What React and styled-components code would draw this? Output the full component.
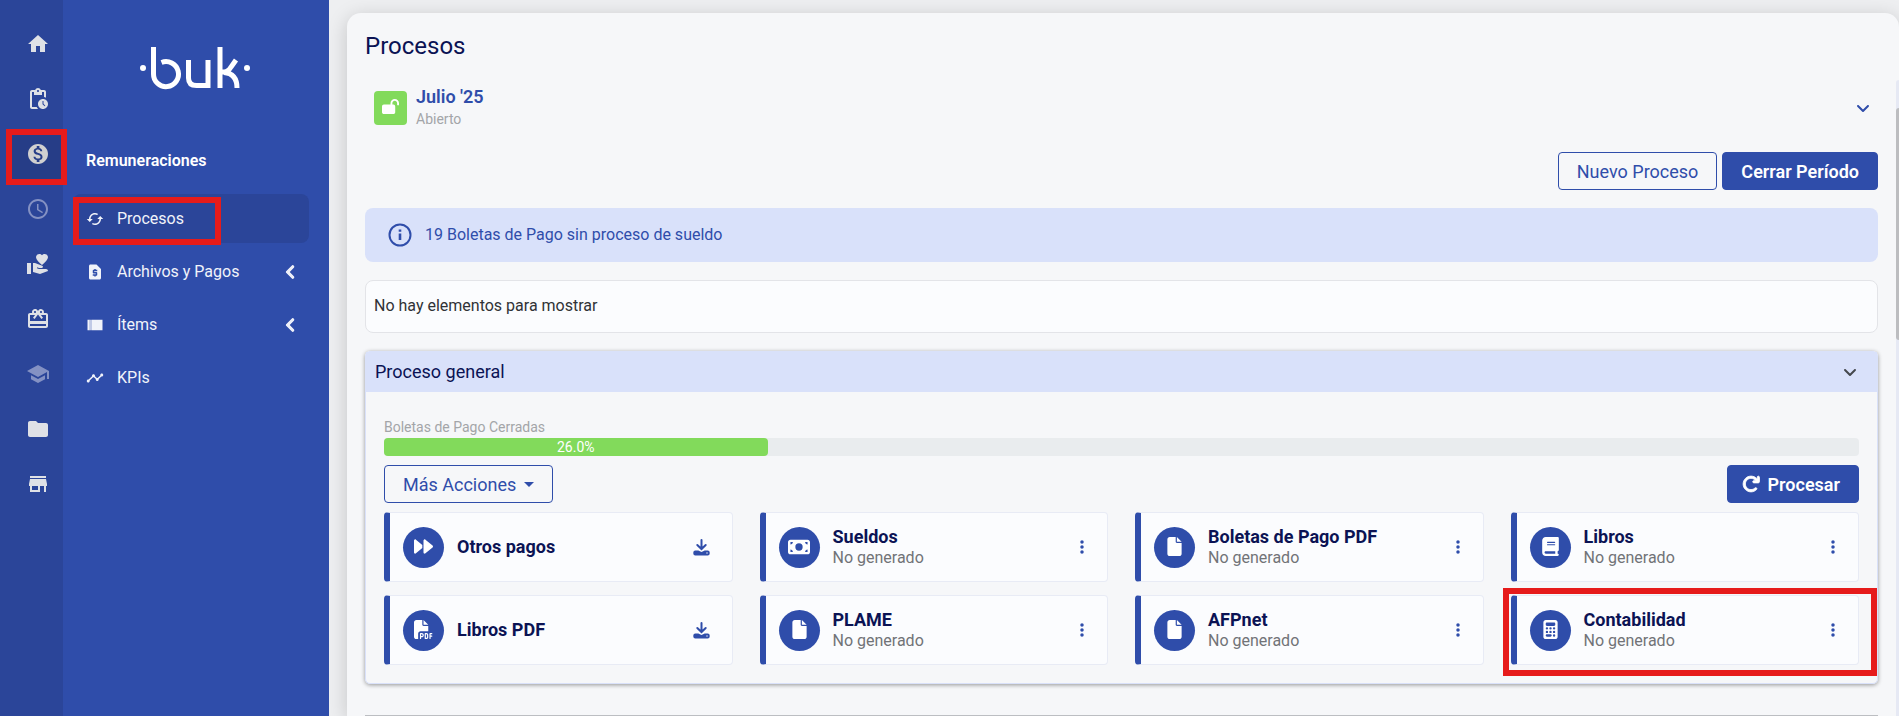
import React from "react";
import styled, { createGlobalStyle, css } from "styled-components";
import {
  MdCached,
  MdFolder,
  MdHome,
  MdMonetizationOn,
  MdPendingActions,
  MdRedeem,
  MdRequestPage,
  MdSchedule,
  MdSchool,
  MdStore,
  MdTimeline,
  MdVolunteerActivism,
} from "react-icons/md";
import {
  FaAngleDown,
  FaArrowRotateRight,
  FaBook,
  FaCalculator,
  FaChevronLeft,
  FaEllipsisVertical,
  FaFile,
  FaFilePdf,
  FaForward,
  FaLockOpen,
  FaMoneyBill,
} from "react-icons/fa6";

const blue = "#2f4daa";
const navy = "#0b1354";
const sky = "#d9e1fa";
const surface = "#f6f7f9";

const GlobalStyle = createGlobalStyle`
  * {
    box-sizing: border-box;
  }

  body {
    margin: 0;
    font-family: Roboto, "Open Sans", sans-serif;
    font-size: 16px;
    line-height: 20px;
    color: #303236;
    background-color: #eeeff1;
  }

  button {
    font-family: inherit;
    cursor: pointer;
  }
`;

const Layout = styled.div`
  display: flex;
  height: 100vh;
  overflow: hidden;
`;

const Highlight = styled.span`
  position: absolute;
  border: 6px solid #e61b1b;
  pointer-events: none;
  z-index: 2;
`;

// ======================================================
//  Icon rail

const Rail = styled.nav`
  display: flex;
  flex-direction: column;
  flex-shrink: 0;
  gap: 5px;
  width: 63px;
  padding-top: 19px;
  background-color: #2b4599;
`;

const RailLink = styled.a`
  position: relative;
  display: flex;
  align-items: center;
  justify-content: center;
  height: 50px;
  margin-left: 13px;
  font-size: 24px;
  color: ${(props) => (props.$muted ? "#8491c3" : "#dfe1e6")};

  ${(props) =>
    props.$active &&
    css`
      color: #d0d0d0;
      background-color: #263d87;
      box-shadow: inset -2px 0 #c09aa0, -4px 0 #263d87;
    `}
`;

const RailHighlight = styled(Highlight)`
  inset: 0 -4px -6px -7px;
`;

// ======================================================
//  Module menu

const Sidebar = styled.aside`
  flex-shrink: 0;
  width: 266px;
  padding: 44px 20px 0 10px;
  background-color: ${blue};
  color: white;
`;

const Logo = styled.svg`
  display: block;
  width: 112px;
  height: 48px;
  margin: 0 auto 0 66px;
`;

const ModuleName = styled.h2`
  margin: 59px 0 23px 13px;
  font-size: 16px;
  font-weight: 600;
  line-height: 20px;
`;

const MenuList = styled.div`
  display: flex;
  flex-direction: column;
  gap: 4px;
`;

const MenuLink = styled.a`
  position: relative;
  display: flex;
  align-items: center;
  height: 49px;
  padding: 0 11px 0 13px;
  border-radius: 8px;
  color: #f1f3fa;
  text-decoration: none;
  background-color: ${(props) => (props.$active ? "#2b4599" : "transparent")};
`;

const MenuIcon = styled.span`
  display: flex;
  width: 18px;
  margin-right: 13px;
  font-size: 18px;
`;

const MenuArrow = styled(FaChevronLeft)`
  margin-left: auto;
  font-size: 14px;
  stroke-width: 50px;
`;

const MenuHighlight = styled(Highlight)`
  inset: 3px 88px -2px 0;
`;

// ======================================================
//  Main section

const Main = styled.main`
  position: relative;
  flex: 1;
  min-width: 0;
  padding: 13px 0 0 18px;
`;

const Sheet = styled.section`
  min-height: 100%;
  padding: 16px 21px 0 18px;
  border-radius: 14px 14px 0 0;
  background-color: ${surface};
  box-shadow: 0 4px 20px rgba(0, 0, 0, 0.18);
`;

const Title = styled.h1`
  margin: 0 0 21px;
  font-size: 24px;
  font-weight: 400;
  line-height: 34px;
  color: ${navy};
`;

const Period = styled.div`
  display: flex;
  align-items: center;
  gap: 9px;
  height: 48px;
  padding: 0 7px 0 9px;
`;

const PeriodBadge = styled.span`
  display: flex;
  align-items: center;
  justify-content: center;
  width: 33px;
  height: 34px;
  padding-bottom: 3px;
  border-radius: 4px;
  font-size: 17px;
  color: white;
  background-color: #82da5b;
`;

const PeriodText = styled.div`
  padding-bottom: 3px;
`;

const PeriodName = styled.a`
  display: block;
  font-size: 18px;
  font-weight: 600;
  line-height: 24px;
  color: ${blue};
  text-decoration: none;
`;

const SmallText = styled.div`
  font-size: 14px;
  line-height: 20px;
  color: #a3a5a8;
`;

const ToggleButton = styled.button`
  display: flex;
  margin-left: auto;
  padding: 0;
  border: none;
  background: none;
  font-size: 16px;
  color: ${(props) => (props.$dark ? "#45484d" : blue)};
`;

const Actions = styled.div`
  display: flex;
  justify-content: ${(props) => (props.$spread ? "space-between" : "flex-end")};
  gap: 5px;
`;

const PeriodActions = styled(Actions)`
  margin: 20px 0 18px;
`;

const Button = styled.button`
  display: flex;
  align-items: center;
  gap: 8px;
  height: 38px;
  padding: 0 18px;
  padding-left: ${(props) => (props.$withIcon ? "14px" : "18px")};
  border: 1px solid ${blue};
  border-radius: 4px;
  font-size: 18px;
  font-weight: ${(props) => (props.$primary ? 600 : 400)};
  color: ${(props) => (props.$primary ? "white" : blue)};
  background-color: ${(props) => (props.$primary ? blue : "transparent")};
`;

const Caret = styled.span`
  border: 5px solid transparent;
  border-top-color: ${blue};
  border-bottom: none;
`;

const Notice = styled.div`
  display: flex;
  align-items: center;
  gap: 13px;
  height: 54px;
  padding: 0 23px;
  border-radius: 8px;
  color: ${blue};
  background-color: ${sky};
`;

const EmptyBox = styled.div`
  margin: 18px 0;
  padding: 15px 8px 16px;
  border: 1px solid #e3e4e8;
  border-radius: 8px;
  background-color: #fbfcfe;
`;

const Panel = styled.section`
  border: 1px solid ${sky};
  border-radius: 5px;
  box-shadow: 0 1px 4px rgba(0, 0, 0, 0.4);
`;

const PanelHeader = styled.header`
  display: flex;
  align-items: center;
  height: 40px;
  padding: 0 19px 0 9px;
  background-color: ${sky};
`;

const PanelTitle = styled.h2`
  margin: 0;
  font-size: 18px;
  font-weight: 400;
  color: ${navy};
`;

const PanelBody = styled.div`
  padding: 25px 18px 18px;
`;

const Progress = styled.div`
  height: 18px;
  margin: 1px 0 9px;
  border-radius: 4px;
  background-color: #e9ecee;
`;

const ProgressBar = styled.div`
  height: 100%;
  border-radius: 4px;
  font-size: 14px;
  line-height: 18px;
  text-align: center;
  color: white;
  background-color: #82da5b;
`;

const Cards = styled.div`
  display: grid;
  grid-template-columns: repeat(4, 1fr);
  gap: 13px 27px;
  margin-top: 9px;
`;

const CardHolder = styled.article`
  position: relative;
  display: flex;
  align-items: center;
  height: 70px;
  padding: 0 20px 0 13px;
  border: 1px solid #e8ebf5;
  border-left: 6px solid ${blue};
  border-radius: 4px;
  background-color: #fbfcfe;
`;

const CardIcon = styled.span`
  display: flex;
  align-items: center;
  justify-content: center;
  width: 41px;
  height: 41px;
  padding-bottom: 1px;
  margin-right: 13px;
  border-radius: 50%;
  font-size: ${(props) => (props.$large ? "22px" : "19px")};
  color: white;
  background-color: ${blue};
`;

const CardTitle = styled.h3`
  margin: 0;
  font-size: 18px;
  font-weight: 700;
  line-height: 22px;
  color: ${navy};
`;

const CardStatus = styled.div`
  color: #717377;
`;

const CardButton = styled.button`
  display: flex;
  justify-content: center;
  width: ${(props) => (props.$wide ? "20px" : "10px")};
  margin-left: auto;
  padding: 0;
  border: none;
  background: none;
  font-size: 16px;
  color: ${blue};
`;

const CardHighlight = styled(Highlight)`
  inset: -8px -19px -12px -14px;
`;

const Divider = styled.hr`
  margin: 31px 0 0;
  border: none;
  border-top: 1px solid #bcbec2;
`;

const ScrollTrack = styled.div`
  position: absolute;
  top: 80px;
  right: 0;
  bottom: 0;
  width: 3px;
  padding-top: 28px;
  border-radius: 3px 0 0 0;
  background-color: #e6e9f4;
`;

const ScrollThumb = styled.div`
  height: 232px;
  border-radius: 3px 0 0 3px;
  background-color: #bcbdc0;
`;

const ItemsIcon = () => (
  <svg width="1em" height="1em" viewBox="0 0 24 24" fill="currentColor">
    <path d="M2 5h3v14H2z" />
    <path d="M5 5h3v14H5z" opacity="0.75" />
    <path d="M8 5h14v14H8z" />
  </svg>
);

const InfoIcon = () => (
  <svg width="24" height="24" viewBox="0 0 24 24" fill="none">
    <circle cx="12" cy="12" r="10.5" stroke="currentColor" strokeWidth="2" />
    <path d="M12 10.5v6.5M12 6.5v2.2" stroke="currentColor" strokeWidth="2.6" />
  </svg>
);

const DownloadIcon = () => (
  <svg width="17" height="17" viewBox="0 0 17 17" fill="none">
    <path
      d="M8.5 1v8M4.3 6l4.2 4 4.2-4"
      stroke="currentColor"
      strokeWidth="2"
      strokeLinecap="round"
    />
    <path
      d="M2.3 11.5h3l3.2 1.5 3.2-1.5h3a2 2 0 0 1 2 2v1a2 2 0 0 1-2 2H2.3a2 2 0 0 1-2-2v-1a2 2 0 0 1 2-2z"
      fill="currentColor"
    />
    <circle cx="14" cy="14" r="0.7" fill="white" />
  </svg>
);

const railItems = [
  { label: "Inicio", icon: <MdHome /> },
  { label: "Pendientes", icon: <MdPendingActions /> },
  { label: "Remuneraciones", icon: <MdMonetizationOn />, active: true },
  { label: "Asistencia", icon: <MdSchedule />, muted: true },
  { label: "Beneficios", icon: <MdVolunteerActivism /> },
  { label: "Regalos", icon: <MdRedeem /> },
  { label: "Capacitaciones", icon: <MdSchool />, muted: true },
  { label: "Documentos", icon: <MdFolder /> },
  { label: "Tienda", icon: <MdStore /> },
];

const menuItems = [
  { label: "Procesos", icon: <MdCached />, active: true },
  { label: "Archivos y Pagos", icon: <MdRequestPage />, nested: true },
  { label: "Ítems", icon: <ItemsIcon />, nested: true },
  { label: "KPIs", icon: <MdTimeline /> },
];

const cards = [
  { title: "Otros pagos", icon: <FaForward />, download: true },
  { title: "Sueldos", icon: <FaMoneyBill />, large: true },
  { title: "Boletas de Pago PDF", icon: <FaFile /> },
  { title: "Libros", icon: <FaBook /> },
  { title: "Libros PDF", icon: <FaFilePdf />, download: true },
  { title: "PLAME", icon: <FaFile /> },
  { title: "AFPnet", icon: <FaFile /> },
  { title: "Contabilidad", icon: <FaCalculator />, marked: true },
];

const Card = ({ title, icon, large, download, marked }) => {
  return (
    <CardHolder>
      <CardIcon $large={large}>{icon}</CardIcon>
      <div>
        <CardTitle>{title}</CardTitle>
        {!download && <CardStatus>No generado</CardStatus>}
      </div>
      <CardButton
        type="button"
        $wide={download}
        aria-label={download ? "Descargar" : "Opciones"}
      >
        {download ? <DownloadIcon /> : <FaEllipsisVertical />}
      </CardButton>
      {marked && <CardHighlight />}
    </CardHolder>
  );
};

const App = () => {
  const progress = "26.0%";

  return (
    <>
      <GlobalStyle />
      <Layout>
        <Rail>
          {railItems.map((item) => (
            <RailLink
              key={item.label}
              href="#"
              aria-label={item.label}
              $active={item.active}
              $muted={item.muted}
            >
              {item.icon}
              {item.active && <RailHighlight />}
            </RailLink>
          ))}
        </Rail>

        <Sidebar>
          <Logo viewBox="0 0 112 48" fill="none" stroke="white" strokeWidth="5">
            <circle cx="4" cy="24" r="3" fill="white" stroke="none" />
            <circle cx="108" cy="24" r="3" fill="white" stroke="none" />
            <path d="M14.5 3v27a12.5 12.5 0 1 0 8-11.5" />
            <path d="M49.5 16v18q0 7.5 8 7.5h11.5V16" />
            <path d="M81 3v41M81 28h4q4 0 7-5l5-7M85 28.5q13 1 13 15.5" />
          </Logo>
          <ModuleName>Remuneraciones</ModuleName>
          <MenuList>
            {menuItems.map((item) => (
              <MenuLink key={item.label} href="#" $active={item.active}>
                <MenuIcon>{item.icon}</MenuIcon>
                {item.label}
                {item.nested && <MenuArrow />}
                {item.active && <MenuHighlight />}
              </MenuLink>
            ))}
          </MenuList>
        </Sidebar>

        <Main>
          <Sheet>
            <Title>Procesos</Title>
            <Period>
              <PeriodBadge>
                <FaLockOpen />
              </PeriodBadge>
              <PeriodText>
                <PeriodName href="#">Julio '25</PeriodName>
                <SmallText>Abierto</SmallText>
              </PeriodText>
              <ToggleButton type="button" aria-label="Ver período">
                <FaAngleDown />
              </ToggleButton>
            </Period>
            <PeriodActions>
              <Button type="button">Nuevo Proceso</Button>
              <Button type="button" $primary>
                Cerrar Período
              </Button>
            </PeriodActions>
            <Notice>
              <InfoIcon />
              19 Boletas de Pago sin proceso de sueldo
            </Notice>
            <EmptyBox>No hay elementos para mostrar</EmptyBox>

            <Panel>
              <PanelHeader>
                <PanelTitle>Proceso general</PanelTitle>
                <ToggleButton type="button" aria-label="Contraer" $dark>
                  <FaAngleDown />
                </ToggleButton>
              </PanelHeader>
              <PanelBody>
                <SmallText>Boletas de Pago Cerradas</SmallText>
                <Progress>
                  <ProgressBar style={{ width: progress }}>
                    {progress}
                  </ProgressBar>
                </Progress>
                <Actions $spread>
                  <Button type="button">
                    Más Acciones
                    <Caret />
                  </Button>
                  <Button type="button" $primary $withIcon>
                    <FaArrowRotateRight strokeWidth={24} />
                    Procesar
                  </Button>
                </Actions>
                <Cards>
                  {cards.map((card) => (
                    <Card key={card.title} {...card} />
                  ))}
                </Cards>
              </PanelBody>
            </Panel>
            <Divider />
          </Sheet>
          <ScrollTrack>
            <ScrollThumb />
          </ScrollTrack>
        </Main>
      </Layout>
    </>
  );
};

export default App;
